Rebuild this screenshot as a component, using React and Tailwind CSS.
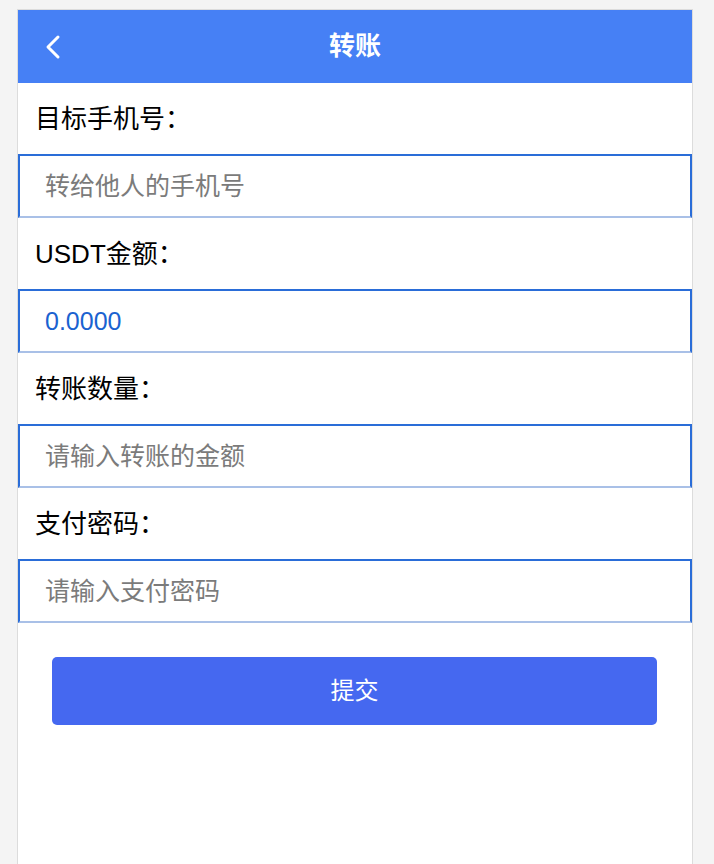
import React, { useState } from 'react';

const fontStack = { fontFamily: '"Liberation Sans", "Noto Sans CJK SC", sans-serif' };

function Field({ label, children }) {
  return (
    <>
      <div className="h-[71px] flex items-center px-[17px] text-[26px] text-black leading-none">
        {label}
      </div>
      {children}
    </>
  );
}

function BoxInput({ value, onChange, placeholder, readOnly, type = 'text' }) {
  return (
    <input
      type={type}
      value={value}
      onChange={onChange}
      placeholder={placeholder}
      readOnly={readOnly}
      className="block w-full h-[64px] px-[25px] text-[25px] bg-white outline-none border-2 border-[#2a6dd8] border-b-[#a9c0e7] placeholder:text-[#7b7b7b] text-[#1a62d0]"
    />
  );
}

export default function App() {
  const [phone, setPhone] = useState('');
  const [amount, setAmount] = useState('');
  const [password, setPassword] = useState('');

  return (
    <div className="min-h-screen bg-[#f4f4f4] pt-[9px]" style={fontStack}>
      <div className="ml-[17px] w-[676px] min-h-[855px] bg-white border-x border-t border-[#dcdcdc]">
        <div className="h-[73px] bg-[#4680f5] relative flex items-center justify-center">
          <button className="absolute left-[26px] top-1/2 -translate-y-1/2 text-white">
            <svg width="20" height="26" viewBox="0 0 20 26" fill="none">
              <path d="M14 3 L4 13 L14 23" stroke="white" strokeWidth="3" strokeLinecap="round" strokeLinejoin="round" />
            </svg>
          </button>
          <h1 className="text-white text-[26px] font-bold">转账</h1>
        </div>

        <Field label="目标手机号：">
          <BoxInput value={phone} onChange={(e) => setPhone(e.target.value)} placeholder="转给他人的手机号" />
        </Field>
        <Field label="USDT金额：">
          <BoxInput value="0.0000" readOnly />
        </Field>
        <Field label="转账数量：">
          <BoxInput value={amount} onChange={(e) => setAmount(e.target.value)} placeholder="请输入转账的金额" />
        </Field>
        <Field label="支付密码：">
          <BoxInput type="password" value={password} onChange={(e) => setPassword(e.target.value)} placeholder="请输入支付密码" />
        </Field>

        <div className="pt-[34px] px-[34px]">
          <button className="w-[605px] h-[68px] rounded-[5px] bg-[#4568f0] text-white text-[24px]">
            提交
          </button>
        </div>
      </div>
    </div>
  );
}
